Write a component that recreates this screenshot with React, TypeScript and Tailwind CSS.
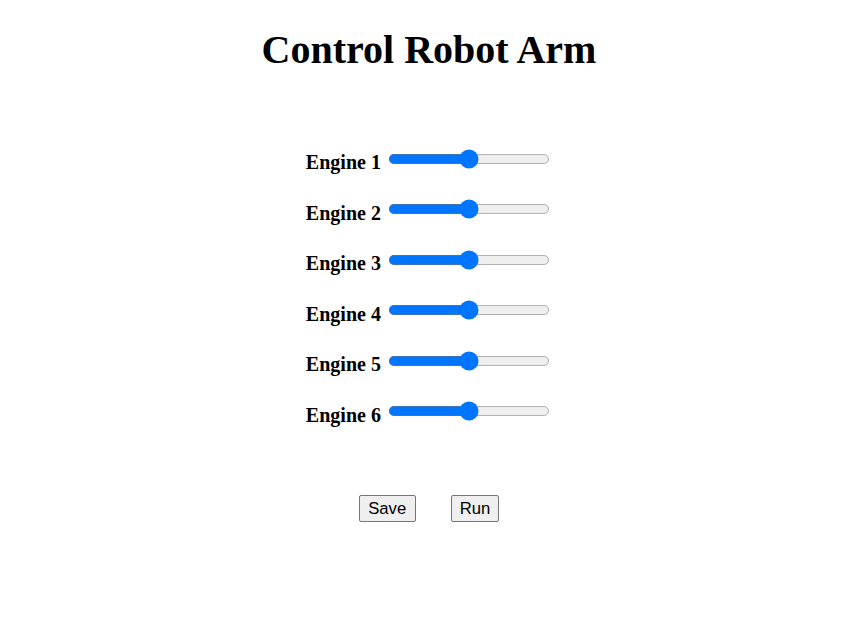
import React from "react";

const engines = [1, 2, 3, 4, 5, 6];

const App: React.FC = () => {
  return (
    <div className="min-h-[627px] w-full bg-white pl-[6px] text-black font-['Liberation_Serif','Times_New_Roman',serif]">
      <h1 className="pt-[27px] text-center text-[40px] font-bold leading-[46px]">
        Control Robot Arm
      </h1>

      <div className="mt-[73px] flex flex-col gap-[20px]">
        {engines.map((n) => (
          <div key={n} className="text-center text-[20px] font-bold">
            <label htmlFor={`engine-${n}`}>Engine {n}</label>{" "}
            <input
              id={`engine-${n}`}
              type="range"
              min={0}
              max={180}
              defaultValue={90}
              className="m-[2px] w-[129px] accent-[#0075ff] [zoom:1.25]"
            />
          </div>
        ))}
      </div>

      <div className="mt-[66px] flex justify-center gap-[35px] font-['Liberation_Sans',Arial,sans-serif]">
        <button className="rounded-[2px] border border-[#767676] bg-[#efefef] px-[8.5px] py-[3px] text-[16.67px] leading-[19px] text-black">
          Save
        </button>
        <button className="rounded-[2px] border border-[#767676] bg-[#efefef] px-[8px] py-[3px] text-[16.67px] leading-[19px] text-black">
          Run
        </button>
      </div>
    </div>
  );
};

export default App;
